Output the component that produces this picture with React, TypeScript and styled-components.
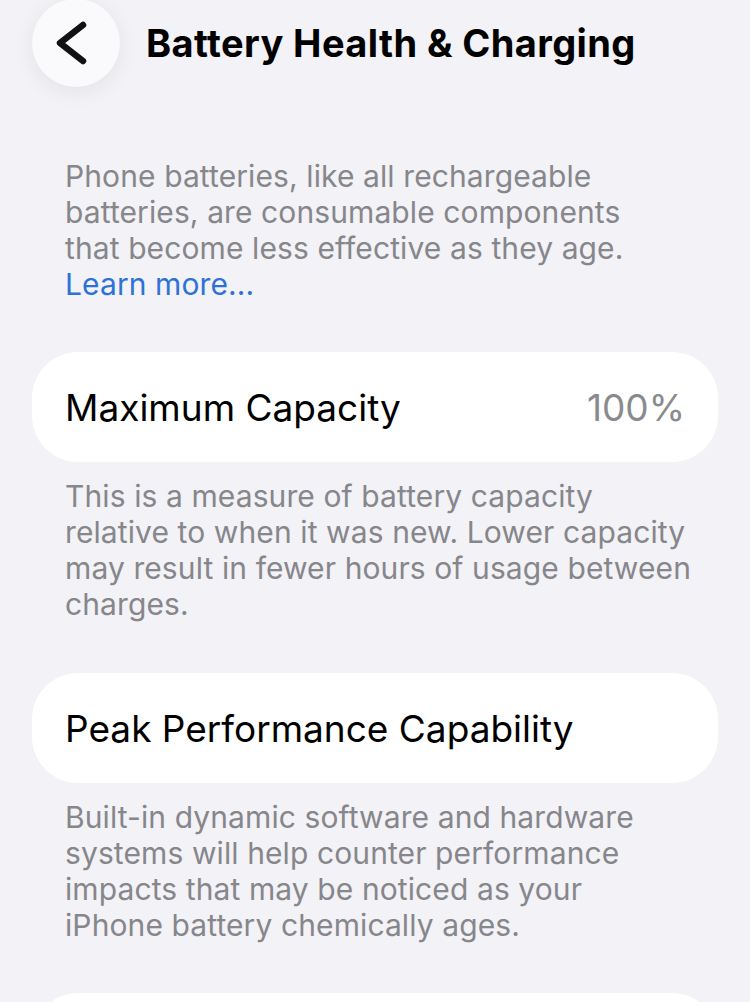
import styled, { createGlobalStyle } from "styled-components";

const GlobalStyle = createGlobalStyle`
  html, body {
    margin: 0;
    padding: 0;
    background: #f2f2f7;
  }
  body {
    font-family: Inter, "Noto Sans", "Liberation Sans", sans-serif;
    -webkit-font-smoothing: antialiased;
  }
`;

const Page = styled.div`
  width: 750px;
  height: 1002px;
  overflow: hidden;
  background: #f2f2f7;
  padding: 0 32px;
  box-sizing: border-box;
`;

const Header = styled.header`
  display: flex;
  align-items: center;
  gap: 26px;
  height: 88px;
  margin-top: -1px;
`;

const BackButton = styled.button`
  width: 88px;
  height: 88px;
  border-radius: 50%;
  border: none;
  padding: 0;
  background: #fafafc;
  box-shadow: 0 4px 22px rgba(0, 0, 0, 0.07);
  display: flex;
  align-items: center;
  justify-content: center;
  flex-shrink: 0;
`;

const Title = styled.h1`
  margin: 0;
  font-size: 38px;
  font-weight: 700;
  letter-spacing: 0.4px;
  color: #000;
  white-space: nowrap;
`;

const Note = styled.p<{ $top: number }>`
  margin: ${(p) => p.$top}px 0 0;
  padding: 0 33px;
  font-size: 30px;
  line-height: 36px;
  color: #86868b;
  letter-spacing: 0.1px;
  white-space: nowrap;
`;

const LinkText = styled.a`
  color: #2f72d6;
  text-decoration: none;
`;

const Card = styled.div<{ $top: number }>`
  margin-top: ${(p) => p.$top}px;
  height: 110px;
  border-radius: 46px;
  background: #ffffff;
  display: flex;
  align-items: center;
  justify-content: space-between;
  padding: 0 33px;
`;

const CardLabel = styled.span`
  font-size: 37px;
  color: #000;
`;

const CardValue = styled.span`
  font-size: 37px;
  color: #8a8a8e;
`;

function Chevron() {
  return (
    <svg width="44" height="48" viewBox="0 0 44 48" fill="none">
      <path
        d="M29 6 L6 24 L29 42"
        stroke="#111"
        strokeWidth="6.5"
        strokeLinecap="round"
        strokeLinejoin="round"
      />
    </svg>
  );
}

export default function App() {
  return (
    <>
      <GlobalStyle />
      <Page>
        <Header>
          <BackButton aria-label="Back">
            <Chevron />
          </BackButton>
          <Title>Battery Health &amp; Charging</Title>
        </Header>

        <Note $top={71}>
          Phone batteries, like all rechargeable
          <br />
          batteries, are consumable components
          <br />
          that become less effective as they age.
          <br />
          <LinkText href="#">Learn more...</LinkText>
        </Note>

        <Card $top={50}>
          <CardLabel>Maximum Capacity</CardLabel>
          <CardValue>100%</CardValue>
        </Card>

        <Note $top={16}>
          This is a measure of battery capacity
          <br />
          relative to when it was new. Lower capacity
          <br />
          may result in fewer hours of usage between
          <br />
          charges.
        </Note>

        <Card $top={51}>
          <CardLabel>Peak Performance Capability</CardLabel>
        </Card>

        <Note $top={16}>
          Built-in dynamic software and hardware
          <br />
          systems will help counter performance
          <br />
          impacts that may be noticed as your
          <br />
          iPhone battery chemically ages.
        </Note>

        <Card $top={50} />
      </Page>
    </>
  );
}
